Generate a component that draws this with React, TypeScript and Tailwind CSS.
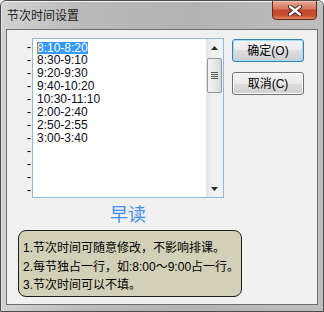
import React from "react";

const times = [
  "8:10-8:20",
  "8:30-9:10",
  "9:20-9:30",
  "9:40-10:20",
  "10:30-11:10",
  "2:00-2:40",
  "2:50-2:55",
  "3:00-3:40",
];

const notes = [
  "1.节次时间可随意修改，不影响排课。",
  "2.每节独占一行，如:8:00～9:00占一行。",
  "3.节次时间可以不填。",
];

const font = {
  fontFamily: '"Liberation Sans", "Noto Sans CJK SC", sans-serif',
};

const App = () => {
  return (
    <div
      className="w-[324px] h-[312px] flex flex-col bg-[linear-gradient(to_right,#d2d2d2,#bababa_25%,#b3b3b3_60%,#bebebe)] border border-[#4b4b4b] rounded-t-[6px] shadow-[inset_0_1px_0_#f4f4f4,inset_1px_0_0_#e4e4e4] text-black overflow-hidden"
      style={font}
    >
      {/* ===== TITLE BAR ===== */}
      <div className="h-[28px] flex justify-between items-start shrink-0">
        <span className="mt-[8px] ml-[6px] text-[12px] leading-[14px] text-[#1b1b1b]">
          节次时间设置
        </span>
        <div className="mr-[6px] mt-[-1px] w-[45px] h-[20px] rounded-b-[4px] border border-[#6b2a1c] bg-[linear-gradient(#e9a894,#d4755c_45%,#c2452b_50%,#c94f32_80%,#dc8466)] shadow-[inset_0_1px_0_#f3c4b5] flex items-center justify-center">
          <svg width="14" height="11" viewBox="0 0 14 11">
            <path
              d="M2 1.5 L12 9.5 M12 1.5 L2 9.5"
              stroke="#3a1a14"
              strokeWidth="4.2"
              strokeLinecap="round"
            />
            <path
              d="M2 1.5 L12 9.5 M12 1.5 L2 9.5"
              stroke="#ffffff"
              strokeWidth="2.4"
              strokeLinecap="round"
            />
          </svg>
        </div>
      </div>
      {/* ===== TITLE BAR END ===== */}

      {/* ===== CLIENT AREA ===== */}
      <div className="ml-[5px] mr-[5px] h-[276px] border border-[#6e6e6e] bg-[#f0f0f0] pl-[11px] pt-[8px]">
        <div className="flex items-start">
          {/* dash column */}
          <div className="ml-[8px] w-[6px] pt-[3px] flex flex-col items-center">
            {Array.from({ length: 12 }).map((_, i) => (
              <span key={i} className="h-[13px] text-[12px] leading-[13px]">
                -
              </span>
            ))}
          </div>

          {/* ===== LIST BOX ===== */}
          <div className="w-[192px] h-[160px] border border-[#8fb9e0] bg-white flex">
            <div className="flex-1 pt-[2px] pl-[4px] flex flex-col">
              {times.map((t, i) => (
                <div key={t} className="h-[13px] flex items-center">
                  {i === 0 ? (
                    <span className="relative bg-[#3399ff] text-white text-[12px] leading-[12px] h-[12px] px-0">
                      <span className="absolute left-0 top-0 w-[1px] h-[12px] bg-[#e0781c]" />
                      {t}
                    </span>
                  ) : (
                    <span className="text-[12px] leading-[13px] text-[#0a0a1e]">{t}</span>
                  )}
                </div>
              ))}
            </div>

            {/* scrollbar */}
            <div className="w-[17px] h-full bg-[linear-gradient(to_right,#e3e3e3,#f0f0f0_40%,#f2f2f2)] flex flex-col items-center">
              <div className="h-[17px] w-full flex items-center justify-center">
                <svg width="7" height="4" viewBox="0 0 7 4">
                  <path d="M0 4 L3.5 0 L7 4 Z" fill="#2a2a2a" />
                </svg>
              </div>
              <div className="w-[15px] h-[35px] mt-[2px] rounded-[2px] border border-[#979797] bg-[linear-gradient(to_right,#f2f2f2,#e8e8e8_50%,#d6d6d6)] flex flex-col items-center justify-center gap-[1px]">
                <span className="w-[7px] h-[1px] bg-[#555]" />
                <span className="w-[7px] h-[1px] bg-[#555]" />
                <span className="w-[7px] h-[1px] bg-[#555]" />
                <span className="w-[7px] h-[1px] bg-[#555]" />
              </div>
              <div className="flex-1" />
              <div className="h-[17px] w-full flex items-center justify-center">
                <svg width="7" height="4" viewBox="0 0 7 4">
                  <path d="M0 0 L7 0 L3.5 4 Z" fill="#2a2a2a" />
                </svg>
              </div>
            </div>
          </div>
          {/* ===== LIST BOX END ===== */}

          {/* ===== BUTTONS ===== */}
          <div className="ml-[8px] mt-[1px] flex flex-col gap-[10px]">
            <button className="w-[72px] h-[23px] rounded-[3px] border border-[#3c7fb1] bg-[linear-gradient(#f2f2f2,#ebebeb_50%,#dddddd_50%,#cfcfcf)] shadow-[inset_0_0_0_1px_#9ee0fb] text-[12px] leading-[14px] text-black">
              确定(O)
            </button>
            <button className="w-[72px] h-[23px] rounded-[3px] border border-[#707070] bg-[linear-gradient(#f2f2f2,#ebebeb_50%,#dddddd_50%,#cfcfcf)] shadow-[inset_0_0_0_1px_#fbfbfb] text-[12px] leading-[14px] text-black">
              取消(C)
            </button>
          </div>
        </div>

        {/* ===== CAPTION ===== */}
        <div className="ml-[14px] w-[192px] mt-[8px] text-center text-[18px] leading-[18px] text-[#3e8ff0]">
          早读
        </div>

        {/* ===== NOTE BOX ===== */}
        <div className="mt-[6px] w-[224px] h-[67px] rounded-[8px] border border-[#1e1e1e] bg-[#d2d0b6] pl-[4px] pt-[8px] text-[12px] leading-[18.5px]">
          {notes.map((n) => (
            <div key={n}>{n}</div>
          ))}
        </div>
      </div>
      {/* ===== CLIENT AREA END ===== */}
    </div>
  );
};

export default App;
